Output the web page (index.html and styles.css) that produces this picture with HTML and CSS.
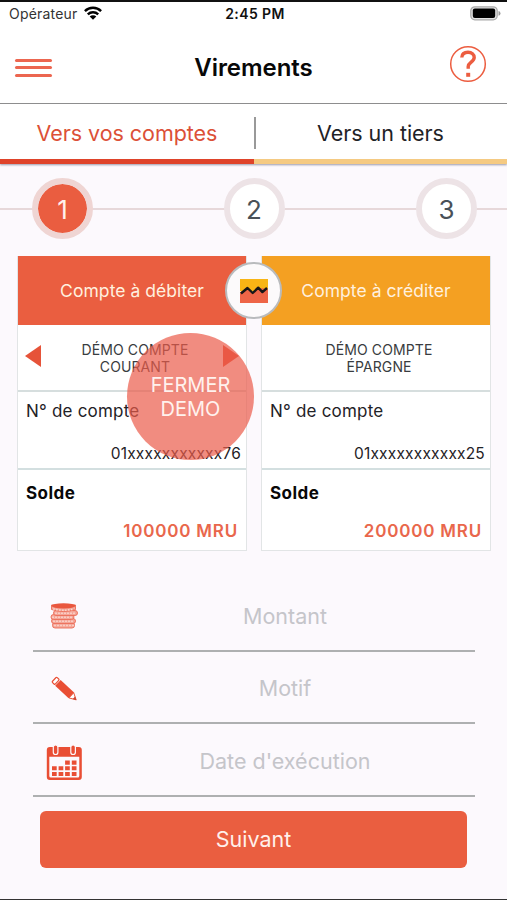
FILE: index.html
```html
<!DOCTYPE html>
<html lang="fr">
<head>
<meta charset="utf-8">
<meta name="viewport" content="width=device-width, initial-scale=1">
<title>Virements</title>
<link rel="stylesheet" href="styles.css">
</head>
<body>
<div class="app">
  <div class="status">
    <div class="status-left"><span class="carrier">Opérateur</span>
      <svg class="wifi" width="18" height="14" viewBox="0 0 18 14"><g fill="none" stroke="#000" stroke-width="2.4"><path d="M.9 5.1a11.5 11.5 0 0 1 16.2 0"/><path d="M3.8 8.4a7.4 7.4 0 0 1 10.4 0"/></g><path d="M9 13.8 5.7 10.6a4.7 4.7 0 0 1 6.6 0z"/></svg>
    </div>
    <span class="clock">2:45 PM</span>
    <svg class="battery" width="31" height="15" viewBox="0 0 31 15"><rect x=".8" y=".8" width="26.4" height="13" rx="4" fill="#e4e4e4" stroke="#aaa" stroke-width="1.3"/><rect x="2.8" y="2.6" width="22.4" height="9.4" rx="2"/><path d="M28.5 5q2 .4 2 2.4t-2 2.4z" fill="#999"/></svg>
  </div>
  <header class="header">
    <button class="menu" aria-label="Menu"><span></span><span></span><span></span></button>
    <h1>Virements</h1>
    <svg class="help" width="38" height="38" viewBox="0 0 38 38" fill="none" stroke="#ec5d40"><circle cx="19" cy="19" r="17.3" stroke-width="1.5"/><path d="M12.8 12.5C13 9 15.5 7.3 19 7.3c3.8 0 6.2 2 6.2 5.2 0 4.5-6 4.7-6 9.1v2.200" stroke-width="3.400"/><path d="M19.2 27.800v4" stroke-width="4"/></svg>
  </header>
  <nav class="tabs">
    <a class="tab active"><span class="t-own">Vers vos comptes</span></a>
    <a class="tab other"><span class="t-third">Vers un tiers</span></a>
  </nav>
  <div class="steps">
    <div class="step current">1</div><div class="step">2</div><div class="step">3</div>
  </div>
  <main class="accounts">
    <section class="card">
      <h2 class="debit">Compte à débiter</h2>
      <div class="name"><i class="arrow left"></i><span>DÉMO COMPTE<br>COURANT</span><i class="arrow right"></i></div>
      <div class="number"><span class="label">N° de compte</span><span class="digits">01xxxxxxxxxxx76</span></div>
      <div class="balance"><span class="label">Solde</span><span class="amount">100000 MRU</span></div>
    </section>
    <section class="card">
      <h2 class="credit">Compte à créditer</h2>
      <div class="name"><span>DÉMO COMPTE<br>ÉPARGNE</span></div>
      <div class="number"><span class="label">N° de compte</span><span class="digits">01xxxxxxxxxxx25</span></div>
      <div class="balance"><span class="label">Solde</span><span class="amount">200000 MRU</span></div>
    </section>
    <div class="badge"><svg width="28" height="24" viewBox="0 0 28 24"><path fill="#f8b515" d="M0 0h28v12H0z"/><path fill="#ee6547" d="M0 13l8-4 5 4 7-4 8 1v14H0z"/><path d="M1 14.500 7.500 9l5.200 5 5.500-5.300 4.200 4.400L27 9" fill="none" stroke="#171717" stroke-width="2.400" stroke-linejoin="round"/></svg></div>
    <button class="close-demo">FERMER<br>DEMO</button>
  </main>
  <form class="form">
    <div class="field"><svg class="icon" width="40" height="40" viewBox="0 0 40 40"><g transform="translate(.5 2)"><g fill="#f4a698" stroke="#ec6d58" stroke-width=".9"><rect x="7" y="24.500" width="22" height="5.500" rx="2.500"/><rect x="6" y="20.500" width="24" height="5" rx="2.500"/><rect x="5.500" y="16.500" width="23" height="5" rx="2.500"/><rect x="8" y="12.500" width="24" height="5" rx="2.500"/><path d="M6 7v4.500q12 4 24 0V7z"/></g><g fill="none" stroke="#fff3ef" stroke-width="1.600" stroke-dasharray="1 2"><path d="M8 11q10 2.500 21 0M10 15.200h21M7 19.200h21M8 23.200h21M9 27.500h19"/></g><ellipse cx="18" cy="7.800" rx="12" ry="2.600" fill="#e9573e"/></g></svg><input class="montant" placeholder="Montant"></div>
    <div class="field"><svg class="icon" width="40" height="40" viewBox="0 0 40 40"><g transform="translate(8.800 11) rotate(43)"><rect x=".6" y="-3.300" width="4" height="6.800" rx="1" fill="#fff" stroke="#e94e34" stroke-width="1.200"/><path d="M5.600-4H24v8H5.600z" fill="#e94e34"/><path d="M24-3.500 30.500 0 24 3.500z" fill="#fff" stroke="#e94e34" stroke-width=".9"/><path d="M27.500-1.700 31 0 27.500 1.700z" fill="#c94533"/></g></svg><input class="motif" placeholder="Motif"></div>
    <div class="field"><svg class="icon" width="40" height="40" viewBox="0 0 40 40"><g transform="translate(.8 0)"><path fill="#e94e34" fill-rule="evenodd" d="M4 6h29q3 0 3 3v27q0 3-3 3H4q-3 0-3-3V9q0-3 3-3zm-.5 9.800V35q0 1.500 1.500 1.500h27q1.500 0 1.500-1.500V15.800z"/><g fill="#e94e34" stroke="#fdf8fb" stroke-width="1.200"><rect x="7.500" y="4" width="4.600" height="9.500" rx="2.300"/><rect x="25" y="4" width="4.600" height="9.500" rx="2.300"/></g><path fill="#e94e34" d="M19.300 19.500h4.700v4.200h-4.700zm6.700 0h4.700v4.200H26zM6.200 25.200h4.700v4.100H6.200zm6.600 0h4.700v4.100h-4.700zm6.500 0h4.700v4.100h-4.700zm6.700 0h4.700v4.100H26zM6.200 31h4.700v4H6.200zm6.600 0h4.700v4h-4.700zm6.500 0h4.700v4h-4.700zm6.700 0h4.700v4H26z"/></g></svg><input class="date" placeholder="Date d'exécution"></div>
    <button type="button" class="next">Suivant</button>
  </form>
</div>
</body>
</html>
```
FILE: styles.css
```css
* { box-sizing: border-box; }
body { margin: 0; font-family: Inter, "Liberation Sans", sans-serif; color: #1f2226; }
button { border: 0; padding: 0; font: inherit; }
.app { height: 900px; display: flex; flex-direction: column; background: #fcf9fd; border-top: 2px solid #111; border-bottom: 1px solid #333; overflow: hidden; }
.status { height: 24px; flex: none; display: grid; grid-template-columns: 1fr auto 1fr; align-items: center; padding: 0 6px 2px 9px; background: #fff; font-size: 14px; }
.status-left { display: flex; align-items: center; gap: 6px; }
.carrier { letter-spacing: .2px; color: #333; }
.clock { font-weight: 600; font-size: 14px; letter-spacing: .4px; color: #111; }
.battery { justify-self: end; }
.header { height: 78px; flex: none; display: grid; grid-template-columns: 40px 1fr 40px; align-items: center; padding: 6px 20px 0 15px; background: #fff; border-bottom: 1px solid #8c8c8c; }
.menu { width: 37px; display: flex; flex-direction: column; gap: 4.500px; background: none; }
.menu span { height: 3px; border-radius: 2px; background: #ec6650; }
h1 { margin: 0 0 0 5px; text-align: center; font-size: 24px; font-weight: 600; letter-spacing: -.05px; color: #080808; }
.help { justify-self: end; margin-top: -7px; }
.tabs { height: 60px; flex: none; display: grid; grid-template-columns: 254px 1fr; background: #fff; box-shadow: 0 1px 2px #99a; position: relative; }
.tab { display: flex; align-items: center; justify-content: center; font-size: 21.500px; letter-spacing: -.05px; border-bottom: 5px solid #f5ca82; padding-top: 3px; }
.tab.active { color: #dc5037; border-color: #df432a; }
.tab.other::before { content: ""; width: 2px; height: 32px; background: #999; }
.t-third { flex: 1; text-align: center; margin-right: 2px; }
.steps { height: 92px; flex: none; display: flex; justify-content: space-between; align-items: center; padding: 0 30px 3px; background: linear-gradient(#e7d8da, #e7d8da) 0 44px / 100% 2px no-repeat; }
.step { width: 61px; height: 61px; border: 6px solid #ede3e6; border-radius: 50%; background: #fff; display: flex; align-items: center; justify-content: center; font-size: 26px; color: #495158; padding-top: 2px; }
.step.current { background: #ea5d40; background-clip: padding-box; border-color: #efd5d3; color: #fff1ec; margin-left: 2px; margin-right: -1px; }
.accounts { position: relative; display: grid; grid-template-columns: 230px 230px; gap: 14px; padding: 0 17px; flex: none; }
.card { height: 295px; background: #fff; border: 1px solid #e2e5e6; border-top: 0; display: grid; grid-template-rows: 69px 67px 78px 1fr; }
h2 { margin: 0; display: flex; align-items: center; justify-content: center; font-size: 17.500px; font-weight: 400; letter-spacing: .05px; color: #fff0df; }
.debit { background: #ea5e40; }
.credit { background: #f4a022; }
.name { position: relative; display: flex; align-items: center; justify-content: center; text-align: center; font-size: 14px; line-height: 16.500px; letter-spacing: .1px; color: #393c40; padding: 2px 0 0 6px; border-bottom: 2px solid #d6dede; }
.arrow { position: absolute; top: 20px; border: solid transparent; border-width: 11px 0; }
.left { left: 7px; border-right: 16px solid #e65339; }
.right { right: 7px; border-left: 16px solid #e65339; }
.number, .balance { display: flex; flex-direction: column; justify-content: space-between; padding: 9px 5px 5px 8px; }
.number { border-bottom: 2px solid #d3dfe0; }
.label { font-size: 17px; line-height: 21px; letter-spacing: .2px; }
.digits { align-self: flex-end; font-size: 15.500px; line-height: 19px; letter-spacing: .2px; }
.balance { padding: 13px 8px 8px 8px; }
.balance .label { font-weight: 700; color: #080808; letter-spacing: .45px; }
.amount { align-self: flex-end; font-size: 17px; line-height: 22px; font-weight: 600; letter-spacing: .8px; color: #e9674c; }
.badge { position: absolute; left: 225px; top: 6px; width: 57px; height: 57px; border-radius: 50%; border: 2px solid #b9bbbd; background: #fcfafb; display: flex; align-items: center; justify-content: center; }
.close-demo { position: absolute; left: 127px; top: 77px; width: 127px; height: 127px; border-radius: 50%; background: rgba(235, 91, 74, .7); color: #fff2ee; font-size: 20px; line-height: 24px; }
.form { padding: 28px 32px 0 33px; display: flex; flex-direction: column; }
.field { height: 72.500px; display: flex; align-items: center; border-bottom: 2px solid #aeb0b1; padding: 3px 0 0 12px; }
.icon { flex: none; }
input { flex: 1; min-width: 0; border: 0; outline: 0; padding: 0 0 0 10px; background: none; font: 21.500px Inter, sans-serif; text-align: center; }
input::placeholder { color: #c5c5ca; opacity: 1; }
.next { height: 57px; margin: 14px 8px 0 7px; border-radius: 6px; background: #ea5e40; color: #fff0eb; font-size: 21.500px; }
```
